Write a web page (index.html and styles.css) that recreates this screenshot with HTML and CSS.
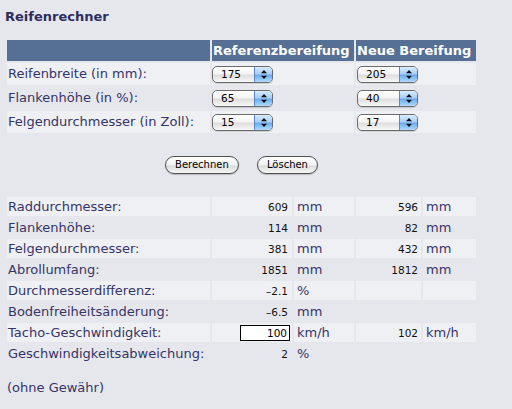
FILE: index.html
```html
<!DOCTYPE html>
<html lang="de">
<head>
  <meta charset="UTF-8">
  <meta name="viewport" content="width=device-width, initial-scale=1.0">
  <title>Reifenrechner</title>
  <link rel="stylesheet" href="styles.css">
</head>
<body>
  <div class="calc">
    <h1 class="title">Reifenrechner</h1>
    <table class="grid">
      <colgroup>
        <col class="c-label">
        <col class="c-val">
        <col class="c-unit">
        <col class="c-val2">
        <col class="c-unit2">
      </colgroup>
      <tr class="head">
        <th></th>
        <th colspan="2">Referenzbereifung</th>
        <th colspan="2">Neue Bereifung</th>
      </tr>
      <tr class="in alt">
        <td class="label">Reifenbreite (in mm):</td>
        <td colspan="2"><span class="select"><span class="select-value">175</span><span class="select-arrow"><svg width="6" height="9" viewBox="0 0 6 9"><path d="M3 0L6 3.3H0Z M0 5.7H6L3 9Z"/></svg></span></span></td>
        <td colspan="2" class="second"><span class="select"><span class="select-value">205</span><span class="select-arrow"><svg width="6" height="9" viewBox="0 0 6 9"><path d="M3 0L6 3.3H0Z M0 5.7H6L3 9Z"/></svg></span></span></td>
      </tr>
      <tr class="in">
        <td class="label">Flankenhöhe (in %):</td>
        <td colspan="2"><span class="select"><span class="select-value">65</span><span class="select-arrow"><svg width="6" height="9" viewBox="0 0 6 9"><path d="M3 0L6 3.3H0Z M0 5.7H6L3 9Z"/></svg></span></span></td>
        <td colspan="2" class="second"><span class="select"><span class="select-value">40</span><span class="select-arrow"><svg width="6" height="9" viewBox="0 0 6 9"><path d="M3 0L6 3.3H0Z M0 5.7H6L3 9Z"/></svg></span></span></td>
      </tr>
      <tr class="in alt">
        <td class="label">Felgendurchmesser (in Zoll):</td>
        <td colspan="2"><span class="select"><span class="select-value">15</span><span class="select-arrow"><svg width="6" height="9" viewBox="0 0 6 9"><path d="M3 0L6 3.3H0Z M0 5.7H6L3 9Z"/></svg></span></span></td>
        <td colspan="2" class="second"><span class="select"><span class="select-value">17</span><span class="select-arrow"><svg width="6" height="9" viewBox="0 0 6 9"><path d="M3 0L6 3.3H0Z M0 5.7H6L3 9Z"/></svg></span></span></td>
      </tr>
      <tr class="actions">
        <td colspan="5">
          <button class="btn">Berechnen</button>
          <button class="btn">Löschen</button>
        </td>
      </tr>
      <tr class="out alt">
        <td class="label">Raddurchmesser:</td>
        <td class="val">609</td><td class="unit">mm</td>
        <td class="val2">596</td><td class="unit">mm</td>
      </tr>
      <tr class="out">
        <td class="label">Flankenhöhe:</td>
        <td class="val">114</td><td class="unit">mm</td>
        <td class="val2">82</td><td class="unit">mm</td>
      </tr>
      <tr class="out alt">
        <td class="label">Felgendurchmesser:</td>
        <td class="val">381</td><td class="unit">mm</td>
        <td class="val2">432</td><td class="unit">mm</td>
      </tr>
      <tr class="out">
        <td class="label">Abrollumfang:</td>
        <td class="val">1851</td><td class="unit">mm</td>
        <td class="val2">1812</td><td class="unit">mm</td>
      </tr>
      <tr class="out alt">
        <td class="label">Durchmesserdifferenz:</td>
        <td class="val">–2.1</td><td class="unit">%</td>
        <td class="val2"></td><td class="unit"></td>
      </tr>
      <tr class="out">
        <td class="label">Bodenfreiheitsänderung:</td>
        <td class="val">–6.5</td><td class="unit">mm</td>
        <td class="val2"></td><td class="unit"></td>
      </tr>
      <tr class="out alt">
        <td class="label">Tacho-Geschwindigkeit:</td>
        <td class="val"><input class="speed" type="text" value="100"></td><td class="unit">km/h</td>
        <td class="val2">102</td><td class="unit">km/h</td>
      </tr>
      <tr class="out">
        <td class="label">Geschwindigkeitsabweichung:</td>
        <td class="val">2</td><td class="unit">%</td>
        <td class="val2"></td><td class="unit"></td>
      </tr>
    </table>
    <p class="note">(ohne Gewähr)</p>
  </div>
</body>
</html>
```

FILE: styles.css
```css
body {
  margin: 0;
  background-color: #e6e7ed;
  font-family: "DejaVu Sans", Verdana, sans-serif;
  font-size: 13px;
  color: #353567;
}

.calc {
  padding: 9px 0 0 5px;
}

.title {
  margin: 0;
  font-size: 13px;
  line-height: 16px;
  font-weight: bold;
  color: #2d2d5d;
}

.grid {
  margin-top: 13px;
  width: 473px;
  table-layout: fixed;
  border-collapse: separate;
  border-spacing: 2px;
}

.c-label { width: 203px; }
.c-val { width: 80px; }
.c-unit { width: 60px; }
.c-val2 { width: 65px; }
.c-unit2 { width: 53px; }

.grid th,
.grid td {
  padding: 0;
  line-height: 16px;
  white-space: nowrap;
}

.head th {
  height: 21px;
  background-color: #566f95;
  color: #fff;
  text-align: left;
  font-weight: bold;
  padding-left: 1px;
}

.in td {
  height: 22px;
}

.out td {
  height: 19px;
}

.alt td {
  background-color: #eff0f4;
}

.label {
  padding-left: 1px !important;
}

.second {
  padding-left: 1px !important;
}

.select {
  display: inline-flex;
  width: 61px;
  height: 17px;
  box-sizing: border-box;
  border: 1px solid #6c6c6c;
  border-radius: 5px;
  overflow: hidden;
  vertical-align: middle;
  background: linear-gradient(#ffffff, #f4f4f4 45%, #dedede 55%, #f8f8f8);
  box-shadow: 0 1px 1px rgba(0, 0, 0, 0.15);
}

.select-value {
  flex: 1;
  padding-left: 8px;
  font-size: 10.5px;
  line-height: 15px;
  color: #000;
}

.select-arrow {
  width: 17px;
  display: flex;
  align-items: center;
  justify-content: center;
  border-left: 1px solid #5f86c4;
  background: linear-gradient(#d8ecff, #a7d0f8 45%, #6ea9ef 55%, #aedbff);
}

.select-arrow svg {
  fill: #111;
}

.actions td {
  height: 60px;
  text-align: center;
}

.btn {
  height: 18px;
  padding: 0 9px;
  margin: 0 7px;
  border: 1px solid #4e4e4e;
  border-radius: 9px;
  background: linear-gradient(#ffffff, #f2f2f2 50%, #dcdcdc 55%, #f6f6f6);
  box-shadow: 0 1px 1px rgba(0, 0, 0, 0.2);
  font-family: "DejaVu Sans", Verdana, sans-serif;
  font-size: 10px;
  line-height: 16px;
  color: #000;
}

.val,
.val2 {
  text-align: right;
  font-size: 10.5px;
  color: #111;
}

.val {
  padding-right: 4px !important;
}

.val2 {
  padding-right: 3px !important;
}

.unit {
  padding-left: 3px !important;
}

.speed {
  width: 50px;
  height: 16px;
  box-sizing: border-box;
  margin: 0 -2px 0 0;
  padding: 0 2px;
  border: 1px solid #000;
  background: #fff;
  text-align: right;
  font-family: "DejaVu Sans", Verdana, sans-serif;
  font-size: 10.5px;
  vertical-align: middle;
}

.note {
  margin: 15px 0 0 2px;
  line-height: 16px;
}
```
